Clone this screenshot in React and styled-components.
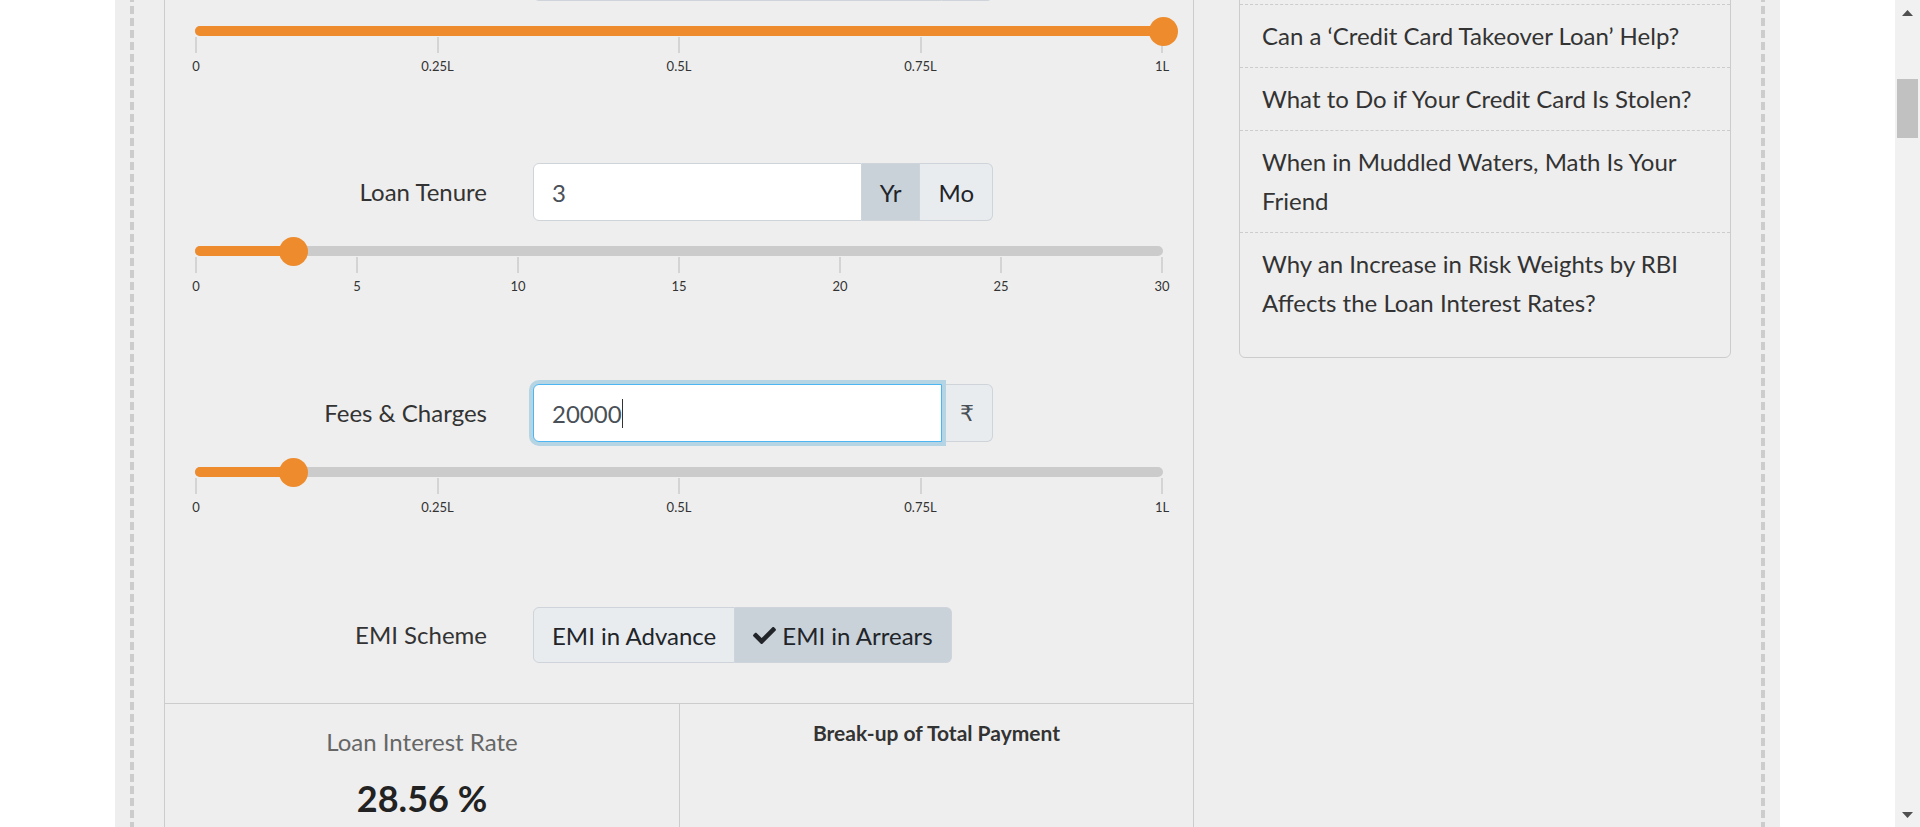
import React from "react";
import styled, { createGlobalStyle } from "styled-components";
import { FaCheck } from "react-icons/fa";

const GlobalStyle = createGlobalStyle`
    html, body {
        margin: 0;
        padding: 0;
        height: 100%;
        overflow: hidden;
    }
    body {
        font-family: Lato, "Noto Sans", sans-serif;
        color: #333;
        background: #fff;
    }
    #root {
        height: 100%;
    }
`;

const Screen = styled.div`
    display: flex;
    height: 100vh;
    overflow: hidden;
`;

const Viewport = styled.div`
    flex: 1;
    overflow: hidden;
    background: #fff;
`;

const PageFrame = styled.div`
    width: 1665px;
    min-height: 100%;
    margin: 0 auto;
    padding: 0 15px;
    box-sizing: border-box;
    background: #eee;
`;

// dashed guide lines left and right, 4px wide
const DashedColumn = styled.div`
    display: flow-root;
    min-height: 100vh;
    padding: 0 34px;
    box-sizing: border-box;
    background-image: linear-gradient(#ccc 8px, transparent 8px), linear-gradient(#ccc 8px, transparent 8px);
    background-size: 4px 12px;
    background-repeat: repeat-y;
    background-position: left 0 top 6px, right 0 top 6px;
`;

// page is scrolled: the top of both columns sits above the window
const Columns = styled.div`
    display: flex;
    align-items: flex-start;
    gap: 45px;
    margin-top: -88px;
`;

const CalcPanel = styled.section`
    width: 1030px;
    box-sizing: border-box;
    border: 1px solid #ccc;
    background: #eee;
`;

const FormArea = styled.div`
    padding: 30px 30px 40px;
`;

const FieldBlock = styled.div`
    margin-bottom: ${p => p.$gap ?? 90}px;
`;

const FormRow = styled.div`
    display: grid;
    grid-template-columns: 292px 460px;
    column-gap: 46px;
    align-items: center;
`;

const FieldLabel = styled.label`
    text-align: right;
    font-size: 24px;
    line-height: 36px;
    color: #333;
`;

const InputGroup = styled.div`
    display: flex;
    height: 58px;
`;

const Field = styled.div`
    flex: 1;
    display: flex;
    align-items: center;
    position: relative;
    z-index: 1;
    padding: 0 18px;
    background: #fff;
    border: 1px solid ${p => (p.$focused ? "#4db6f2" : "#ced4da")};
    border-radius: 6px 0 0 6px;
    box-shadow: ${p => (p.$focused ? "0 0 0 4px #b6d5e4" : "none")};
    font-size: 24px;
    color: #495057;
`;

const Caret = styled.span`
    display: inline-block;
    width: 1px;
    height: 29px;
    background: #333;
`;

const Addon = styled.div`
    display: flex;
    align-items: center;
    justify-content: center;
    padding: 0 18px;
    border: 1px solid #ced4da;
    border-left: none;
    background: ${p => (p.$active ? "#c9d1d9" : "#e9ecef")};
    font-size: 24px;
    color: #212529;

    &:last-child {
        border-radius: 0 6px 6px 0;
    }
`;

const Rupee = styled.span`
    font-family: "DejaVu Sans", "Noto Sans", sans-serif;
    font-size: 22px;
    color: #495057;
`;

const ToggleGroup = styled.div`
    display: flex;
    justify-self: start;
    height: 56px;
`;

const ToggleButton = styled.div`
    display: flex;
    align-items: center;
    gap: 6px;
    padding: 0 18px;
    border: 1px solid #ced4da;
    background: ${p => (p.$active ? "#c9d1d9" : "#e9ecef")};
    font-size: 24px;
    color: #212529;

    &:first-child {
        border-radius: 6px 0 0 6px;
    }
    &:last-child {
        border-left: none;
        border-radius: 0 6px 6px 0;
    }
`;

const SliderBox = styled.div`
    margin-top: 25px;
`;

const Track = styled.div`
    position: relative;
    height: 10px;
    border-radius: 5px;
    background: #cbcbcb;
`;

const Fill = styled.div`
    height: 100%;
    border-radius: 5px;
    background: #ed8b2d;
`;

const Thumb = styled.div`
    position: absolute;
    top: 50%;
    width: 29px;
    height: 29px;
    margin: -14.5px 0 0 -14.5px;
    border-radius: 50%;
    background: #ed8b2d;
`;

const Ticks = styled.div`
    display: flex;
    justify-content: space-between;
    margin-top: 1px;
`;

const TickMark = styled.div`
    width: 2px;
    display: flex;
    flex-direction: column;
    align-items: center;
`;

const TickLine = styled.div`
    width: 2px;
    height: 16px;
    background: #d4d4d4;
`;

const TickLabel = styled.span`
    margin-top: 5px;
    font-size: 13px;
    line-height: 16px;
    white-space: nowrap;
    color: #333;
`;

const Results = styled.div`
    display: grid;
    grid-template-columns: 1fr 1fr;
    min-height: 300px;
    border-top: 1px solid #ccc;
`;

const ResultCell = styled.div`
    text-align: center;
    padding-top: ${p => p.$pad}px;

    & + & {
        border-left: 1px solid #ccc;
    }
`;

const ResultLabel = styled.div`
    font-size: 24px;
    line-height: 36px;
    color: #666;
`;

const ResultValue = styled.div`
    margin-top: 16px;
    font-size: 36px;
    line-height: 44px;
    font-weight: 700;
    color: #222;
`;

const ChartTitle = styled.div`
    font-size: 21px;
    line-height: 26px;
    font-weight: 700;
    color: #333;
`;

const Sidebar = styled.aside`
    width: 492px;
    box-sizing: border-box;
    padding: 91px 0 23px;
    border: 1px solid #ccc;
    border-radius: 6px;
    background: #eee;
`;

const ArticleItem = styled.div`
    padding: 11px 22px 12px;
    border-top: 1px dashed #ccc;
    font-size: 24px;
    line-height: 39px;
    color: #333;
`;

const ScrollTrack = styled.div`
    width: 25px;
    display: flex;
    flex-direction: column;
    align-items: center;
    background: #f1f1f1;
`;

const ScrollArrow = styled.div`
    width: 25px;
    height: 25px;
    display: flex;
    align-items: center;
    justify-content: center;
`;

const ScrollThumb = styled.div`
    width: 21px;
    height: 59px;
    margin-top: 54px;
    background: #c1c1c1;
`;

const ScrollSpacer = styled.div`
    flex: 1;
`;

function Slider({ value, ticks }) {
    const pct = value * 100 + "%";
    return (
        <SliderBox>
            <Track>
                <Fill style={{ width: pct }} />
                <Thumb style={{ left: pct }} />
            </Track>
            <Ticks>
                {ticks.map(t => (
                    <TickMark key={t}>
                        <TickLine />
                        <TickLabel>{t}</TickLabel>
                    </TickMark>
                ))}
            </Ticks>
        </SliderBox>
    );
}

const lakhTicks = ["0", "0.25L", "0.5L", "0.75L", "1L"];
const yearTicks = ["0", "5", "10", "15", "20", "25", "30"];

const articles = [
    "Can a ‘Credit Card Takeover Loan’ Help?",
    "What to Do if Your Credit Card Is Stolen?",
    "When in Muddled Waters, Math Is Your Friend",
    "Why an Increase in Risk Weights by RBI Affects the Loan Interest Rates?",
];

export default function App() {
    return (
        <>
            <GlobalStyle />
            <Screen>
                <Viewport>
                    <PageFrame>
                        <DashedColumn>
                            <Columns>
                                <CalcPanel>
                                    <FormArea>
                                        <FieldBlock $gap={89}>
                                            <FormRow>
                                                <FieldLabel>Loan Amount</FieldLabel>
                                                <InputGroup>
                                                    <Field>100000</Field>
                                                    <Addon><Rupee>₹</Rupee></Addon>
                                                </InputGroup>
                                            </FormRow>
                                            <Slider value={1} ticks={lakhTicks} />
                                        </FieldBlock>

                                        <FieldBlock>
                                            <FormRow>
                                                <FieldLabel>Loan Tenure</FieldLabel>
                                                <InputGroup>
                                                    <Field>3</Field>
                                                    <Addon $active>Yr</Addon>
                                                    <Addon>Mo</Addon>
                                                </InputGroup>
                                            </FormRow>
                                            <Slider value={0.102} ticks={yearTicks} />
                                        </FieldBlock>

                                        <FieldBlock $gap={92}>
                                            <FormRow>
                                                <FieldLabel>Fees &amp; Charges</FieldLabel>
                                                <InputGroup>
                                                    <Field $focused>20000<Caret /></Field>
                                                    <Addon><Rupee>₹</Rupee></Addon>
                                                </InputGroup>
                                            </FormRow>
                                            <Slider value={0.102} ticks={lakhTicks} />
                                        </FieldBlock>

                                        <FieldBlock $gap={0}>
                                            <FormRow>
                                                <FieldLabel>EMI Scheme</FieldLabel>
                                                <ToggleGroup>
                                                    <ToggleButton>EMI in Advance</ToggleButton>
                                                    <ToggleButton $active>
                                                        <FaCheck size={23} />
                                                        EMI in Arrears
                                                    </ToggleButton>
                                                </ToggleGroup>
                                            </FormRow>
                                        </FieldBlock>
                                    </FormArea>

                                    <Results>
                                        <ResultCell $pad={20}>
                                            <ResultLabel>Loan Interest Rate</ResultLabel>
                                            <ResultValue>28.56 %</ResultValue>
                                        </ResultCell>
                                        <ResultCell $pad={16}>
                                            <ChartTitle>Break-up of Total Payment</ChartTitle>
                                        </ResultCell>
                                    </Results>
                                </CalcPanel>

                                <Sidebar>
                                    {articles.map(a => (
                                        <ArticleItem key={a}>{a}</ArticleItem>
                                    ))}
                                </Sidebar>
                            </Columns>
                        </DashedColumn>
                    </PageFrame>
                </Viewport>

                <ScrollTrack>
                    <ScrollArrow>
                        <svg width="11" height="6" viewBox="0 0 11 6">
                            <polygon points="5.5,0 11,6 0,6" fill="#505050" />
                        </svg>
                    </ScrollArrow>
                    <ScrollThumb />
                    <ScrollSpacer />
                    <ScrollArrow>
                        <svg width="11" height="6" viewBox="0 0 11 6">
                            <polygon points="0,0 11,0 5.5,6" fill="#505050" />
                        </svg>
                    </ScrollArrow>
                </ScrollTrack>
            </Screen>
        </>
    );
}
